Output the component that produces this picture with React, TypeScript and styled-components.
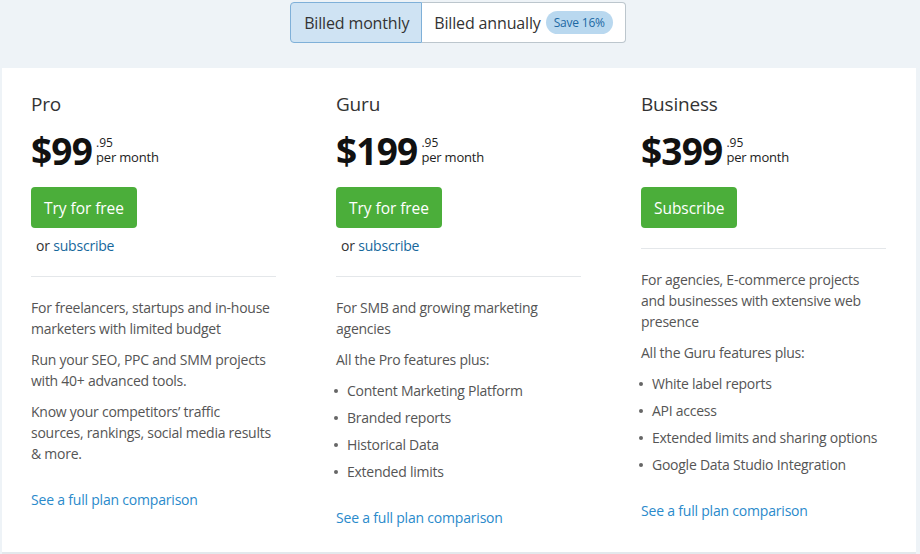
import React from "react";
import styled, { createGlobalStyle } from "styled-components";

const Global = createGlobalStyle`
  html, body { margin: 0; padding: 0; background: #eef3f7; }
  body { font-family: "Open Sans", "Noto Sans", sans-serif; color: #333; }
  * { box-sizing: border-box; }
`;

const Page = styled.div`
  width: 920px;
  height: 554px;
  display: flex;
  flex-direction: column;
  align-items: center;
  padding-top: 2px;
  overflow: hidden;
`;

const Toggle = styled.div`
  display: flex;
  height: 41px;
  margin-left: -4px;
`;

const Segment = styled.button<{ $active?: boolean }>`
  display: flex;
  align-items: center;
  gap: 5px;
  height: 41px;
  padding: 0 12px 0 ${(p) => (p.$active ? "13px" : "12px")};
  font-family: inherit;
  font-size: 16px;
  letter-spacing: -0.15px;
  color: #333;
  cursor: pointer;
  background: ${(p) => (p.$active ? "#cfe3f3" : "#fff")};
  border: 1px solid ${(p) => (p.$active ? "#7fb0d8" : "#bcc6cd")};
  border-radius: ${(p) => (p.$active ? "4px 0 0 4px" : "0 4px 4px 0")};
  ${(p) => (p.$active ? "" : "border-left: none;")}
`;

const Badge = styled.span`
  display: inline-flex;
  align-items: center;
  height: 23px;
  padding: 0 8px;
  border-radius: 12px;
  background: #b9d8ef;
  color: #1c68a3;
  font-size: 12px;
  letter-spacing: -0.2px;
`;

const Card = styled.div`
  margin-top: 25px;
  align-self: stretch;
  margin-left: 2px;
  margin-right: 4px;
  flex: 1;
  background: #fff;
  border-bottom: 2px solid #e3e8ec;
  display: grid;
  grid-template-columns: repeat(3, 245px);
  column-gap: 60px;
  padding: 24px 0 0 29px;
  align-items: start;
`;

const Plan = styled.div`
  display: flex;
  flex-direction: column;
  align-items: flex-start;
`;

const Title = styled.h2`
  margin: 0;
  font-size: 19px;
  line-height: 24px;
  font-weight: 400;
  color: #333;
  letter-spacing: -0.2px;
`;

const PriceRow = styled.div`
  display: flex;
  align-items: flex-start;
  margin-top: 12px;
`;

const Amount = styled.span`
  font-size: 37px;
  font-weight: 700;
  line-height: 46px;
  color: #111;
  letter-spacing: -0.8px;
`;

const Cents = styled.div`
  display: flex;
  flex-direction: column;
  margin-left: 4px;
  margin-top: 8px;
  color: #222;
`;

const Small = styled.span`
  font-size: 12px;
  line-height: 14px;
`;

const PerMonth = styled.span`
  font-size: 13px;
  line-height: 15px;
  letter-spacing: -0.2px;
`;

const GreenButton = styled.button`
  margin-top: 13px;
  height: 41px;
  padding: 0 13px;
  border: none;
  border-radius: 4px;
  background: #4bae3a;
  color: #fff;
  font-family: inherit;
  font-size: 15.5px;
  letter-spacing: -0.05px;
  cursor: pointer;
`;

const OrLine = styled.div`
  margin-top: 7px;
  margin-left: 5px;
  font-size: 14px;
  line-height: 21px;
  letter-spacing: -0.2px;
  color: #333;
`;

const DarkLink = styled.a`
  color: #16679c;
  text-decoration: none;
`;

const Divider = styled.hr`
  align-self: stretch;
  margin: 20px 0 0;
  border: none;
  border-top: 1px solid #e4e7ea;
`;

const Body = styled.div`
  margin-top: 20px;
  width: 241px;
  display: flex;
  flex-direction: column;
  gap: 10px;
  font-size: 14px;
  line-height: 21px;
  letter-spacing: -0.25px;
  color: #555;
`;

const Para = styled.p`
  margin: 0;
`;

const List = styled.ul`
  margin: 0;
  padding: 0;
  list-style: none;
  display: flex;
  flex-direction: column;
  gap: 6px;
`;

const Item = styled.li`
  display: flex;
  align-items: center;
  &::before {
    content: "";
    flex: none;
    width: 4px;
    height: 4px;
    border-radius: 50%;
    background: #666;
    margin: 1px 9px 0 -2px;
  }
`;

const CompareLink = styled.a`
  margin-top: 25px;
  font-size: 14px;
  line-height: 21px;
  letter-spacing: -0.2px;
  color: #2a8acb;
  text-decoration: none;
`;

type PlanData = {
  name: string;
  price: string;
  cta: string;
  showOr: boolean;
  paragraphs: string[];
  features?: string[];
};

const plans: PlanData[] = [
  {
    name: "Pro",
    price: "$99",
    cta: "Try for free",
    showOr: true,
    paragraphs: [
      "For freelancers, startups and in-house marketers with limited budget",
      "Run your SEO, PPC and SMM projects with 40+ advanced tools.",
      "Know your competitors’ traffic sources, rankings, social media results & more.",
    ],
  },
  {
    name: "Guru",
    price: "$199",
    cta: "Try for free",
    showOr: true,
    paragraphs: ["For SMB and growing marketing agencies", "All the Pro features plus:"],
    features: ["Content Marketing Platform", "Branded reports", "Historical Data", "Extended limits"],
  },
  {
    name: "Business",
    price: "$399",
    cta: "Subscribe",
    showOr: false,
    paragraphs: [
      "For agencies, E-commerce projects and businesses with extensive web presence",
      "All the Guru features plus:",
    ],
    features: [
      "White label reports",
      "API access",
      "Extended limits and sharing options",
      "Google Data Studio Integration",
    ],
  },
];

export default function App() {
  return (
    <>
      <Global />
      <Page>
        <Toggle>
          <Segment $active>Billed monthly</Segment>
          <Segment>
            Billed annually <Badge>Save 16%</Badge>
          </Segment>
        </Toggle>
        <Card>
          {plans.map((p) => (
            <Plan key={p.name}>
              <Title>{p.name}</Title>
              <PriceRow>
                <Amount>{p.price}</Amount>
                <Cents>
                  <Small>.95</Small>
                  <PerMonth>per month</PerMonth>
                </Cents>
              </PriceRow>
              <GreenButton>{p.cta}</GreenButton>
              {p.showOr && (
                <OrLine>
                  or <DarkLink href="#">subscribe</DarkLink>
                </OrLine>
              )}
              <Divider />
              <Body>
                {p.paragraphs.map((t) => (
                  <Para key={t}>{t}</Para>
                ))}
                {p.features && (
                  <List>
                    {p.features.map((f) => (
                      <Item key={f}>{f}</Item>
                    ))}
                  </List>
                )}
              </Body>
              <CompareLink href="#">See a full plan comparison</CompareLink>
            </Plan>
          ))}
        </Card>
      </Page>
    </>
  );
}
